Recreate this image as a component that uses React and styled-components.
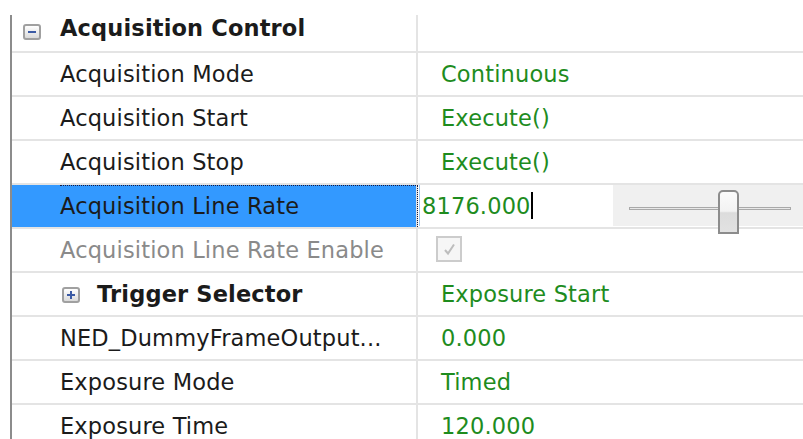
import styled, { createGlobalStyle } from "styled-components";

const GlobalStyle = createGlobalStyle`
  html, body {
    margin: 0;
    padding: 0;
    background: #ffffff;
  }
  body {
    font-family: "DejaVu Sans", Verdana, sans-serif;
    font-size: 22.5px;
    letter-spacing: 0.15px;
    color: #1b1b1b;
    overflow: hidden;
  }
`;

const Grid = styled.div`
  margin: 15px 0 0 10px;
  border-left: 2px solid #8c8c8c;
  height: 424px;
  overflow: hidden;
`;

const Row = styled.div`
  display: grid;
  grid-template-columns: 406px 1fr;
  height: ${(p) => (p.$header ? 38 : 44)}px;
  box-sizing: border-box;
  border-bottom: 2px solid #e4e4e4;
`;

const NameCell = styled.div`
  position: relative;
  display: flex;
  align-items: center;
  gap: ${(p) => p.$gap || 18}px;
  box-sizing: border-box;
  padding-left: ${(p) => p.$indent}px;
  padding-bottom: ${(p) => (p.$header ? 18 : 1)}px;
  border-right: 2px solid #e4e4e4;
  white-space: nowrap;
  font-weight: ${(p) => (p.$bold ? 700 : 400)};
  color: ${(p) => (p.$disabled ? "#8a8a8a" : "#1b1b1b")};
  background: ${(p) => (p.$selected ? "#3399ff" : "transparent")};

  /* focus rectangle on the selected property */
  ${(p) =>
    p.$selected &&
    `
    &::before {
      content: "";
      position: absolute;
      top: 0;
      left: 48px;
      right: -2px;
      bottom: 0;
      border-top: 1px dotted #1a1a40;
      border-right: 1px dotted #1a1a40;
    }
  `}
`;

const ValueCell = styled.div`
  display: flex;
  align-items: center;
  padding-left: ${(p) => (p.$flush ? 0 : 23)}px;
  padding-bottom: 1px;
  color: #1e8c1e;
  white-space: nowrap;
`;

const ExpandBox = styled.span`
  display: inline-flex;
  align-items: center;
  justify-content: center;
  width: 18px;
  height: 16px;
  flex: none;
  box-sizing: border-box;
  border: 2px solid #a0a0a0;
  border-radius: 3px;
  background: linear-gradient(#ffffff, #dadada);
  margin-top: ${(p) => p.$offset || 0}px;

  svg {
    display: block;
  }
`;

const Editor = styled.div`
  display: flex;
  align-items: center;
  width: 194px;
  height: 100%;
  box-sizing: border-box;
  padding-left: 2px;
  margin-left: 1px;
  background: #ffffff;
  border-left: 1px solid #9cc8f4;
`;

const Caret = styled.span`
  display: inline-block;
  width: 2px;
  height: 27px;
  background: #000000;
`;

const SliderArea = styled.div`
  position: relative;
  flex: 1;
  height: 100%;
  background: #f0f0f0;
`;

const Track = styled.div`
  position: absolute;
  left: 16px;
  right: 12px;
  top: 22px;
  height: 3px;
  box-sizing: border-box;
  border: 1px solid #a9a9a9;
  background: #e8e8e8;
`;

const Thumb = styled.div`
  position: absolute;
  top: 5px;
  width: 21px;
  height: 44px;
  box-sizing: border-box;
  border: 2px solid #8c8c8c;
  border-radius: 5px 5px 0 0;
  background: linear-gradient(#fbfbfb 0%, #f2f2f2 48%, #dcdcdc 52%, #e2e2e2 100%);
`;

const Check = styled.span`
  display: inline-flex;
  align-items: center;
  justify-content: center;
  width: 26px;
  height: 26px;
  box-sizing: border-box;
  margin-left: -5px;
  margin-bottom: 1px;
  border: 2px solid #cccccc;
  background: #f6f6f6;
`;

function Minus() {
  return (
    <svg width="10" height="10" viewBox="0 0 10 10">
      <rect x="1" y="4" width="8" height="2" fill="#3b5aa4" />
    </svg>
  );
}

function Plus() {
  return (
    <svg width="10" height="10" viewBox="0 0 10 10">
      <rect x="1" y="4" width="8" height="2" fill="#3b5aa4" />
      <rect x="4" y="1" width="2" height="8" fill="#3b5aa4" />
    </svg>
  );
}

function CheckMark() {
  return (
    <svg width="15" height="15" viewBox="0 0 15 15">
      <path d="M3 8 L6 11.5 L12 2.5" fill="none" stroke="#bdbdbd" strokeWidth="2" />
    </svg>
  );
}

const properties = [
  { name: "Acquisition Mode", value: "Continuous" },
  { name: "Acquisition Start", value: "Execute()" },
  { name: "Acquisition Stop", value: "Execute()" },
  { name: "Acquisition Line Rate", value: "8176.000", editing: true, slider: 0.555 },
  { name: "Acquisition Line Rate Enable", checkbox: true, disabled: true },
  { name: "Trigger Selector", value: "Exposure Start", group: true },
  { name: "NED_DummyFrameOutput...", value: "0.000" },
  { name: "Exposure Mode", value: "Timed" },
  { name: "Exposure Time", value: "120.000" },
];

function PropertyRow({ p }) {
  if (p.editing) {
    return (
      <Row>
        <NameCell $indent={48} $selected>
          {p.name}
        </NameCell>
        <ValueCell $flush>
          <Editor>
            {p.value}
            <Caret />
          </Editor>
          <SliderArea>
            <Track />
            <Thumb style={{ left: `${p.slider * 100}%` }} />
          </SliderArea>
        </ValueCell>
      </Row>
    );
  }

  if (p.group) {
    return (
      <Row>
        <NameCell $indent={50} $gap={17} $bold>
          <ExpandBox $offset={3}>
            <Plus />
          </ExpandBox>
          {p.name}
        </NameCell>
        <ValueCell>{p.value}</ValueCell>
      </Row>
    );
  }

  return (
    <Row>
      <NameCell $indent={48} $disabled={p.disabled}>
        {p.name}
      </NameCell>
      <ValueCell>
        {p.checkbox ? (
          <Check>
            <CheckMark />
          </Check>
        ) : (
          p.value
        )}
      </ValueCell>
    </Row>
  );
}

export default function App() {
  return (
    <>
      <GlobalStyle />
      <Grid>
        <Row $header>
          <NameCell $indent={11} $gap={19} $header $bold>
            <ExpandBox $offset={8}>
              <Minus />
            </ExpandBox>
            Acquisition Control
          </NameCell>
          <ValueCell />
        </Row>
        {properties.map((p) => (
          <PropertyRow key={p.name} p={p} />
        ))}
      </Grid>
    </>
  );
}
